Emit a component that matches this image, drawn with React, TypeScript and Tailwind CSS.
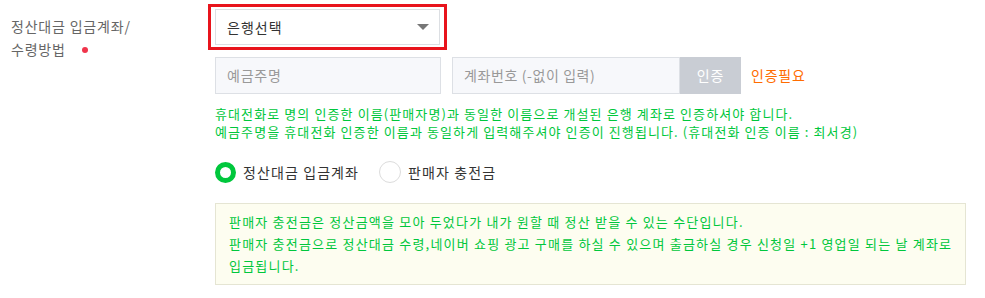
import React from "react";

const font = { fontFamily: '"Noto Sans CJK KR", "Noto Sans", sans-serif' };

// ─── Radio option ────────────────────────────────────────────────────────────
function Radio({ label, checked }: { label: string; checked?: boolean }) {
  return (
    <label className="flex items-center gap-[7px] cursor-pointer">
      <span
        className={
          checked
            ? "w-[21px] h-[21px] rounded-full border-[5px] border-[#00c73c] bg-white"
            : "w-[22px] h-[22px] rounded-full border border-[#dcdcdc] bg-white"
        }
      />
      <span className="text-[14px] tracking-[1.1px] text-[#333]">{label}</span>
    </label>
  );
}

export default function App() {
  return (
    <div className="w-[985px] h-[298px] bg-white flex" style={font}>
      {/* ── Label column ── */}
      <div className="w-[215px] shrink-0 pl-[11px] pt-[15px] text-[14px] leading-[23px] tracking-[0.8px] text-[#666]">
        <div>정산대금 입금계좌/</div>
        <div className="flex items-center">
          수령방법
          <span className="ml-[16px] w-[6px] h-[6px] rounded-full bg-[#f0344b]" />
        </div>
      </div>

      {/* ── Field column ── */}
      <div className="flex flex-col pt-[4px]">
        {/* highlighted bank select */}
        <div className="-ml-[7px] w-[239px] border-[3px] border-[#e8141c] px-[4px] py-[2px]">
          <div className="h-[36px] border border-[#dcdfe3] bg-white flex items-center justify-between pl-[11px] pr-[10px]">
            <span className="text-[14px] tracking-[1px] text-[#333]">은행선택</span>
            <svg width="12" height="6" viewBox="0 0 12 6">
              <path d="M0 0 L12 0 L6 6 Z" fill="#777" />
            </svg>
          </div>
        </div>

        {/* account inputs */}
        <div className="flex items-center mt-[7px]">
          <div className="w-[226px] h-[37px] border border-[#dde0e5] bg-[#f7f8fb] flex items-center pl-[11px] text-[14px] tracking-[0.8px] text-[#999]">
            예금주명
          </div>
          <div className="ml-[11px] w-[228px] h-[37px] border border-[#dde0e5] bg-[#f7f8fb] flex items-center pl-[11px] text-[14px] tracking-[0.6px] text-[#999]">
            계좌번호 (-없이 입력)
          </div>
          <div className="w-[61px] h-[37px] bg-[#c9cdd4] flex items-center justify-center text-[14px] tracking-[0.8px] text-white">
            인증
          </div>
          <span className="ml-[10px] text-[14px] tracking-[0.8px] text-[#ff6c00]">인증필요</span>
        </div>

        {/* notice */}
        <div className="mt-[11px] text-[13px] leading-[18px] tracking-[1.1px] text-[#00c73c] whitespace-nowrap">
          <div>휴대전화로 명의 인증한 이름(판매자명)과 동일한 이름으로 개설된 은행 계좌로 인증하셔야 합니다.</div>
          <div>예금주명을 휴대전화 인증한 이름과 동일하게 입력해주셔야 인증이 진행됩니다. (휴대전화 인증 이름 : 최서경)</div>
        </div>

        {/* settlement type */}
        <div className="mt-[20px] flex items-center gap-[20px]">
          <Radio label="정산대금 입금계좌" checked />
          <Radio label="판매자 충전금" />
        </div>

        {/* info box */}
        <div className="mt-[20px] w-[751px] border border-[#e5e5d3] bg-[#fdfdf0] pl-[13px] py-[7px] text-[13px] leading-[22px] tracking-[1.2px] text-[#00c73c] whitespace-nowrap">
          <div>판매자 충전금은 정산금액을 모아 두었다가 내가 원할 때 정산 받을 수 있는 수단입니다.</div>
          <div>판매자 충전금으로 정산대금 수령,네이버 쇼핑 광고 구매를 하실 수 있으며 출금하실 경우 신청일 +1 영업일 되는 날 계좌로</div>
          <div>입금됩니다.</div>
        </div>
      </div>
    </div>
  );
}
